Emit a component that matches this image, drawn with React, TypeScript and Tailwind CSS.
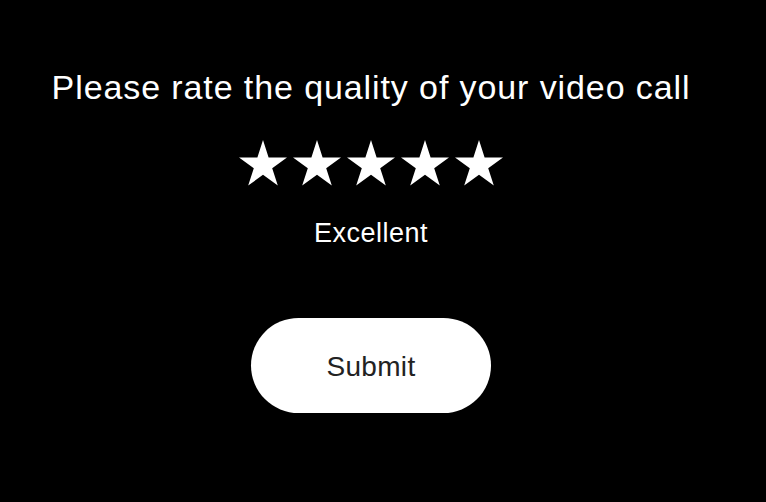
import { useState } from 'react';

const LABELS = ['Terrible', 'Bad', 'Okay', 'Good', 'Excellent'];

function Star({ filled }: { filled: boolean }) {
  return (
    <svg width="48" height="46" viewBox="0 0 48 46" aria-hidden="true">
      <polygon
        points="24,0 29.6,17.4 48,17.4 33.2,28.2 38.8,45.6 24,34.8 9.2,45.6 14.8,28.2 0,17.4 18.4,17.4"
        fill={filled ? '#ffffff' : 'transparent'}
        stroke="#ffffff"
        strokeWidth={filled ? 0 : 2}
      />
    </svg>
  );
}

export default function App() {
  const [rating, setRating] = useState(5);

  return (
    <div className="min-h-[502px] w-full bg-black font-['Liberation_Sans',Arial,sans-serif] text-white">
      <div className="flex w-[742px] flex-col items-center pt-[70px]">
        <h1 className="text-[34px] leading-none font-normal tracking-[0.9px]">
          Please rate the quality of your video call
        </h1>

        <div className="mt-[36px] flex gap-[6px]">
          {[1, 2, 3, 4, 5].map((n) => (
            <button key={n} type="button" onClick={() => setRating(n)} className="block">
              <Star filled={n <= rating} />
            </button>
          ))}
        </div>

        <p className="mt-[34px] text-[27px] leading-none tracking-[0.5px]">{LABELS[rating - 1]}</p>

        <button
          type="button"
          className="mt-[71px] h-[95px] w-[240px] rounded-full bg-white pt-[3px] text-[28px] tracking-[0.3px] text-[#222222]"
        >
          Submit
        </button>
      </div>
    </div>
  );
}
